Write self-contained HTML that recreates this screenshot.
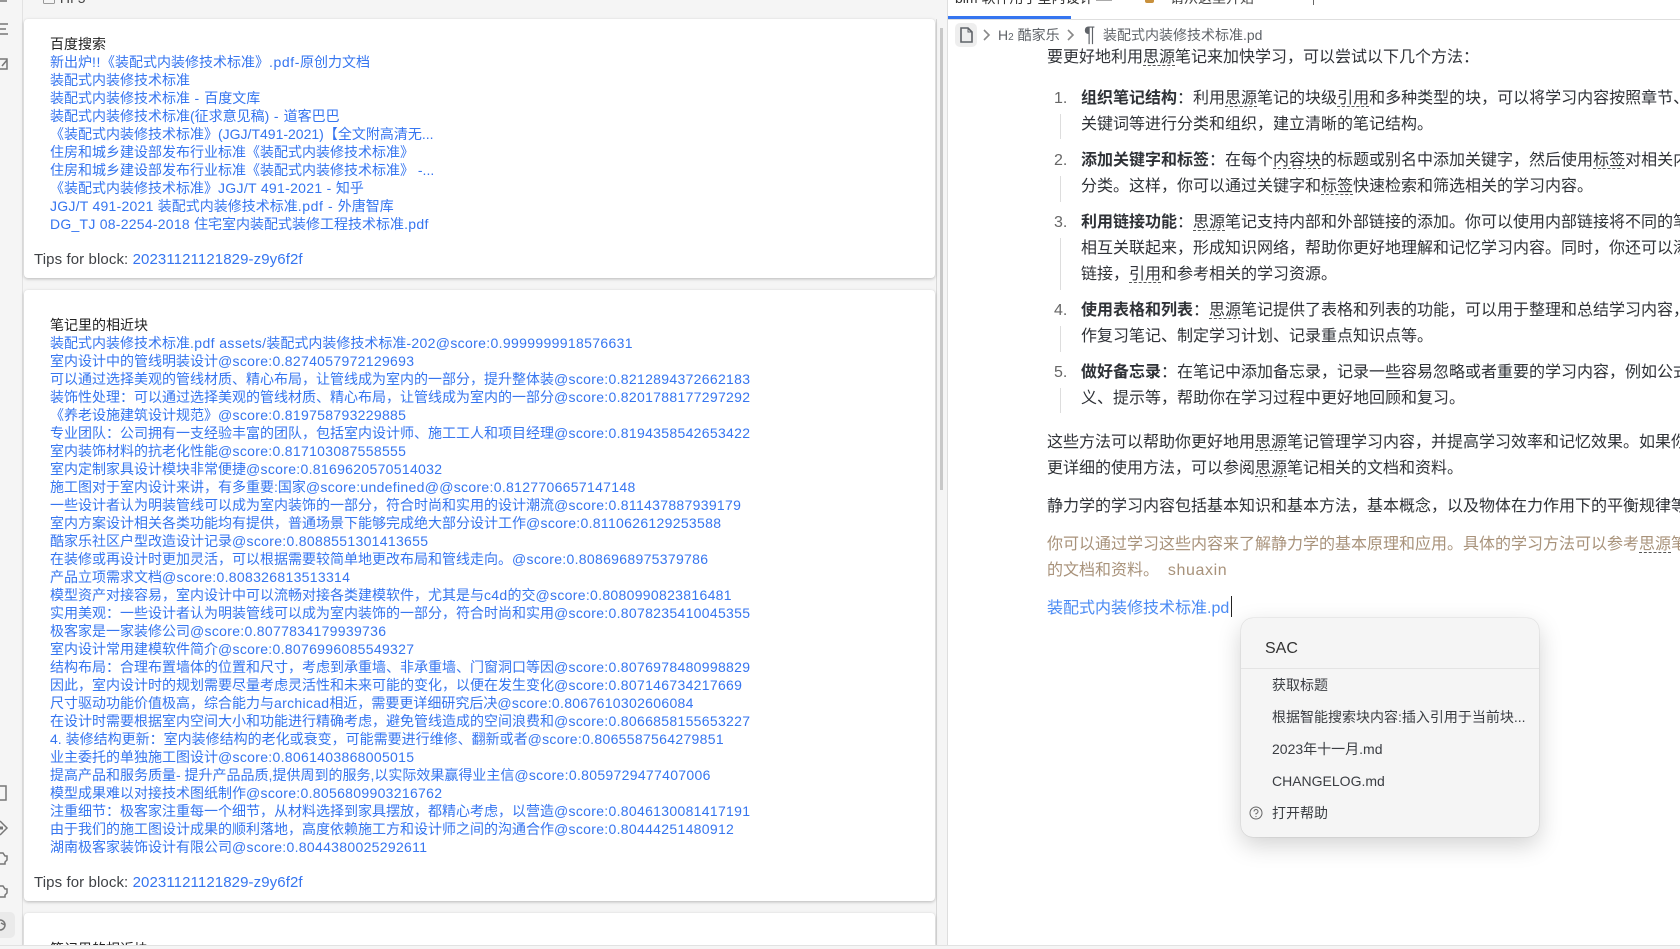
<!DOCTYPE html>
<html lang="zh"><head><meta charset="utf-8"><title>SiYuan</title>
<style>
html,body{margin:0;padding:0;width:1680px;height:949px;overflow:hidden}
body{font-family:"Liberation Sans","Noto Sans CJK SC",sans-serif;color:#222;background:#fff}
#w{position:relative;width:1680px;height:949px;overflow:hidden;background:#fff}
.a{position:absolute}
.c{position:absolute;left:24px;width:911px;background:#fff;border-radius:4px;box-shadow:0 1px 3px rgba(0,0,0,.25)}
.l{position:absolute;left:50px;font-size:14px;line-height:18px;height:18px;white-space:nowrap;color:#3575f0}
.l em{font-style:normal;letter-spacing:.31px}
.l em.x{letter-spacing:.6px}
.k{color:#222}
.t{position:absolute;left:34px;font-size:15px;line-height:18px;height:18px;white-space:nowrap;color:#3f4246;letter-spacing:.1px}
.t span{color:#3575f0}
.r{position:absolute;font-size:16px;line-height:26px;height:26px;white-space:nowrap;color:#2f3237}
.r b{font-weight:700}
.n{position:absolute;left:1054px;font-size:16px;line-height:26px;color:#666}
u{text-decoration:underline dashed #555 1px;text-underline-offset:3px}
.g{position:absolute;left:1060px;width:1px;background:#ddd}
.m{position:absolute;left:31px;font-size:14px;line-height:20px;white-space:nowrap;color:#3a3d42}
svg{position:absolute;overflow:visible}
</style></head><body><div id="w">
<div class="a" style="left:0;top:0;width:948px;height:949px;background:#f5f5f5"></div>
<div class="a" style="left:22px;top:0;width:1px;height:945px;background:#e2e2e2"></div>
<div class="a" style="left:947px;top:0;width:1px;height:945px;background:#dedede"></div>
<div class="a" style="left:936px;top:19px;width:1px;height:926px;background:#d8d8d8"></div>
<div class="a" style="left:940px;top:28px;width:3px;height:462px;background:#c8c8c8"></div>

<!-- sidebar icons -->
<svg style="left:0;top:0" width="22" height="945" fill="none" stroke="#777" stroke-width="1.5">
<path d="M0 1H7"/>
<path d="M0 24H8M0 29H6M0 34H8"/>
<path d="M0 59H7V69H0M2 66L7 60"/>
<path d="M0 786H6V800H0"/>
<path d="M0 821L7 828L0 835" /><path d="M0 828H3" stroke-width="3"/>
<path d="M0 853H3L5 856H7V860L5 862V864H0"/>
<path d="M0 886H3L5 889H7V893L5 895V897H0"/>
<rect x="-6" y="912" width="21" height="26" rx="5" fill="#eaeaea" stroke="none"/>
<path d="M0 920A5 5 0 0 1 0 930M1 923L5 925" />
</svg>

<!-- top-left cut text -->
<div class="a" style="left:42px;top:-11px;font-size:14px;line-height:18px;color:#444">▣ Hf 5</div>

<!-- card 1 -->
<div class="c" style="top:19px;height:259px"></div>
<div class="l k" style="top:35px">百度搜索</div>
<div class="l" style="top:53px">新出炉<em class="x">!!</em>《装配式内装修技术标准》<em class="x">.pdf-</em>原创力文档</div>
<div class="l" style="top:71px">装配式内装修技术标准</div>
<div class="l" style="top:89px">装配式内装修技术标准<em class="x"> - </em>百度文库</div>
<div class="l" style="top:107px">装配式内装修技术标准(征求意见稿)<em class="x"> - </em>道客巴巴</div>
<div class="l" style="top:125px">《装配式内装修技术标准》(JGJ/T491-2021)【全文附高清无...</div>
<div class="l" style="top:143px">住房和城乡建设部发布行业标准《装配式内装修技术标准》</div>
<div class="l" style="top:161px">住房和城乡建设部发布行业标准《装配式内装修技术标准》 -...</div>
<div class="l" style="top:179px">《装配式内装修技术标准》<em>JGJ/T 491-2021 - </em>知乎</div>
<div class="l" style="top:197px"><em style="letter-spacing:.25px">JGJ/T 491-2021 </em>装配式内装修技术标准<em class="x">.pdf - </em>外唐智库</div>
<div class="l" style="top:215px"><em style="letter-spacing:.25px">DG_TJ 08-2254-2018 </em>住宅室内装配式装修工程技术标准<em>.pdf</em></div>
<div class="t" style="top:251px">Tips for block: <span>20231121121829-z9y6f2f</span></div>

<!-- card 2 -->
<div class="c" style="top:290px;height:611px"></div>
<div class="l k" style="top:316px">笔记里的相近块</div>
<div class="l" style="top:334px">装配式内装修技术标准<em style="letter-spacing:.4px">.pdf assets/</em>装配式内装修技术标准<em style="letter-spacing:.34px">-202@score:0.9999999918576631</em></div>
<div class="l" style="top:352px">室内设计中的管线明装设计<em>@score:0.8274057972129693</em></div>
<div class="l" style="top:370px">可以通过选择美观的管线材质、精心布局，让管线成为室内的一部分，提升整体装<em>@score:0.8212894372662183</em></div>
<div class="l" style="top:388px">装饰性处理：可以通过选择美观的管线材质、精心布局，让管线成为室内的一部分<em>@score:0.8201788177297292</em></div>
<div class="l" style="top:406px">《养老设施建筑设计规范》<em>@score:0.819758793229885</em></div>
<div class="l" style="top:424px">专业团队：公司拥有一支经验丰富的团队，包括室内设计师、施工工人和项目经理<em>@score:0.8194358542653422</em></div>
<div class="l" style="top:442px">室内装饰材料的抗老化性能<em>@score:0.817103087558555</em></div>
<div class="l" style="top:460px">室内定制家具设计模块非常便捷<em>@score:0.8169620570514032</em></div>
<div class="l" style="top:478px">施工图对于室内设计来讲，有多重要:国家<em>@score:undefined@@score:0.8127706657147148</em></div>
<div class="l" style="top:496px">一些设计者认为明装管线可以成为室内装饰的一部分，符合时尚和实用的设计潮流<em>@score:0.811437887939179</em></div>
<div class="l" style="top:514px">室内方案设计相关各类功能均有提供，普通场景下能够完成绝大部分设计工作<em>@score:0.8110626129253588</em></div>
<div class="l" style="top:532px">酷家乐社区户型改造设计记录<em>@score:0.8088551301413655</em></div>
<div class="l" style="top:550px">在装修或再设计时更加灵活，可以根据需要较简单地更改布局和管线走向。<em>@score:0.8086968975379786</em></div>
<div class="l" style="top:568px">产品立项需求文档<em>@score:0.808326813513314</em></div>
<div class="l" style="top:586px">模型资产对接容易，室内设计中可以流畅对接各类建模软件，尤其是与<em>c4d</em>的交<em>@score:0.8080990823816481</em></div>
<div class="l" style="top:604px">实用美观：一些设计者认为明装管线可以成为室内装饰的一部分，符合时尚和实用<em>@score:0.8078235410045355</em></div>
<div class="l" style="top:622px">极客家是一家装修公司<em>@score:0.8077834179939736</em></div>
<div class="l" style="top:640px">室内设计常用建模软件简介<em>@score:0.8076996085549327</em></div>
<div class="l" style="top:658px">结构布局：合理布置墙体的位置和尺寸，考虑到承重墙、非承重墙、门窗洞口等因<em>@score:0.8076978480998829</em></div>
<div class="l" style="top:676px">因此，室内设计时的规划需要尽量考虑灵活性和未来可能的变化，以便在发生变化<em>@score:0.807146734217669</em></div>
<div class="l" style="top:694px">尺寸驱动功能价值极高，综合能力与<em>archicad</em>相近，需要更详细研究后决<em>@score:0.8067610302606084</em></div>
<div class="l" style="top:712px">在设计时需要根据室内空间大小和功能进行精确考虑，避免管线造成的空间浪费和<em>@score:0.8066858155653227</em></div>
<div class="l" style="top:730px">4. 装修结构更新：室内装修结构的老化或衰变，可能需要进行维修、翻新或者<em>@score:0.8065587564279851</em></div>
<div class="l" style="top:748px">业主委托的单独施工图设计<em>@score:0.8061403868005015</em></div>
<div class="l" style="top:766px">提高产品和服务质量- 提升产品品质,提供周到的服务,以实际效果赢得业主信<em>@score:0.8059729477407006</em></div>
<div class="l" style="top:784px">模型成果难以对接技术图纸制作<em>@score:0.8056809903216762</em></div>
<div class="l" style="top:802px">注重细节：极客家注重每一个细节，从材料选择到家具摆放，都精心考虑，以营造<em>@score:0.8046130081417191</em></div>
<div class="l" style="top:820px">由于我们的施工图设计成果的顺利落地，高度依赖施工方和设计师之间的沟通合作<em>@score:0.80444251480912</em></div>
<div class="l" style="top:838px">湖南极客家装饰设计有限公司<em>@score:0.8044380025292611</em></div>
<div class="t" style="top:874px">Tips for block: <span>20231121121829-z9y6f2f</span></div>

<!-- card 3 -->
<div class="c" style="top:913px;height:32px;border-radius:4px 4px 0 0"></div>
<div class="l k" style="top:940px">笔记里的相近块</div>

<!-- tabs -->
<div class="a" style="left:948px;top:19px;width:732px;height:1px;background:#dedede"></div>
<div class="a" style="left:948px;top:16px;width:123px;height:3px;background:#3575f0"></div>
<div class="a" style="left:955px;top:-11px;font-size:14px;line-height:18px;color:#333;white-space:nowrap">bim 软件用于室内设计</div>
<div class="a" style="left:1096px;top:0;width:16px;height:1px;background:#aaa"></div>
<div class="a" style="left:1170px;top:-11px;font-size:14px;line-height:18px;color:#444;white-space:nowrap">请从这里开始</div>
<div class="a" style="left:1145px;top:-6px;width:9px;height:9px;background:#c8903c;border-radius:2px"></div>
<div class="a" style="left:1313px;top:-4px;width:1px;height:9px;background:#666"></div>

<!-- breadcrumb -->
<div class="a" style="left:955px;top:23px;width:22px;height:24px;background:#eeeeee;border-radius:5px"></div>
<svg style="left:955px;top:23px" width="22" height="24" fill="none" stroke="#5f6368" stroke-width="1.6"><path d="M6 5H13L17 9V19H6Z"/><path d="M13 5V9H17" stroke-width="1"/></svg>
<svg style="left:983px;top:28px" width="100" height="14" fill="none" stroke="#888" stroke-width="1.6"><path d="M1 2L6 7L1 12"/><path d="M85 2L90 7L85 12"/></svg>
<div class="a" style="left:998px;top:26px;font-size:14px;line-height:18px;color:#5f6368;white-space:nowrap">H<span style="font-size:10px">2</span> 酷家乐</div>
<div class="a" style="left:1084px;top:25px;font-size:21px;line-height:20px;color:#5f6368">¶</div>
<div class="a" style="left:1103px;top:26px;font-size:14px;line-height:18px;color:#5f6368;white-space:nowrap">装配式内装修技术标准.pd</div>

<!-- document -->
<div class="r" style="left:1047px;top:45px">要更好地利用<u>思源</u>笔记来加快学习，可以尝试以下几个方法：</div>

<div class="n" style="top:86px">1.</div>
<div class="r" style="left:1081px;top:86px"><b>组织笔记结构</b>：利用<u>思源</u>笔记的块级<u>引用</u>和多种类型的块，可以将学习内容按照章节、主题</div>
<div class="g" style="top:114px;height:25px"></div>
<div class="r" style="left:1081px;top:112px">关键词等进行分类和组织，建立清晰的笔记结构。</div>

<div class="n" style="top:148px">2.</div>
<div class="r" style="left:1081px;top:148px"><b>添加关键字和标签</b>：在每个<u>内容块</u>的标题或别名中添加关键字，然后使用<u>标签</u>对相关内容进行</div>
<div class="g" style="top:176px;height:26px"></div>
<div class="r" style="left:1081px;top:174px">分类。这样，你可以通过关键字和<u>标签</u>快速检索和筛选相关的学习内容。</div>

<div class="n" style="top:210px">3.</div>
<div class="r" style="left:1081px;top:210px"><b>利用链接功能</b>：<u>思源</u>笔记支持内部和外部链接的添加。你可以使用内部链接将不同的笔记</div>
<div class="g" style="top:238px;height:52px"></div>
<div class="r" style="left:1081px;top:236px">相互关联起来，形成知识网络，帮助你更好地理解和记忆学习内容。同时，你还可以添加外部</div>
<div class="r" style="left:1081px;top:262px">链接，<u>引用</u>和参考相关的学习资源。</div>

<div class="n" style="top:298px">4.</div>
<div class="r" style="left:1081px;top:298px"><b>使用表格和列表</b>：<u>思源</u>笔记提供了表格和列表的功能，可以用于整理和总结学习内容，</div>
<div class="g" style="top:326px;height:26px"></div>
<div class="r" style="left:1081px;top:324px">作复习笔记、制定学习计划、记录重点知识点等。</div>

<div class="n" style="top:360px">5.</div>
<div class="r" style="left:1081px;top:360px"><b>做好备忘录</b>：在笔记中添加备忘录，记录一些容易忽略或者重要的学习内容，例如公式</div>
<div class="g" style="top:388px;height:25px"></div>
<div class="r" style="left:1081px;top:386px">义、提示等，帮助你在学习过程中更好地回顾和复习。</div>

<div class="r" style="left:1047px;top:430px">这些方法可以帮助你更好地用<u>思源</u>笔记管理学习内容，并提高学习效率和记忆效果。如果你</div>
<div class="r" style="left:1047px;top:456px">更详细的使用方法，可以参阅<u>思源</u>笔记相关的文档和资料。</div>
<div class="r" style="left:1047px;top:494px">静力学的学习内容包括基本知识和基本方法，基本概念，以及物体在力作用下的平衡规律等。</div>
<div class="r" style="left:1047px;top:532px;color:#a8927a">你可以通过学习这些内容来了解静力学的基本原理和应用。具体的学习方法可以参考<u>思源</u>笔记</div>
<div class="r" style="left:1047px;top:558px;color:#a8927a">的文档和资料。&nbsp;&nbsp;<span style="letter-spacing:.6px">shuaxin</span></div>
<div class="r" style="left:1047px;top:596px;color:#4a8af4">装配式内装修技术标准.pd</div>
<div class="a" style="left:1231px;top:596px;width:1px;height:21px;background:#222"></div>

<!-- popup -->
<div class="a" style="left:1241px;top:618px;width:298px;height:219px;background:#f5f5f5;border-radius:12px;box-shadow:0 0 1px rgba(0,0,0,.3),0 8px 24px rgba(0,0,0,.18)">
<div class="a" style="left:24px;top:19px;font-size:16px;line-height:24px;color:#333">SAC</div>
<div class="a" style="left:0;top:50px;width:298px;height:1px;background:#e4e4e4"></div>
<div class="m" style="top:57px">获取标题</div>
<div class="m" style="top:89px">根据智能搜索块内容:插入引用于当前块...</div>
<div class="m" style="top:121px">2023年十一月.md</div>
<div class="m" style="top:153px">CHANGELOG.md</div>
<div class="m" style="top:185px">打开帮助</div>
<svg style="left:8px;top:188px" width="14" height="14" fill="none" stroke="#666" stroke-width="1"><circle cx="7" cy="7" r="6"/><path d="M5 5.5A2 2 0 1 1 7 7.5V8.5M7 10V11"/></svg>
</div>

<!-- status -->
<div class="a" style="left:0;top:945px;width:1680px;height:4px;background:#f5f5f5;border-top:1px solid #e2e2e2;box-sizing:border-box"></div>
</div></body></html>
